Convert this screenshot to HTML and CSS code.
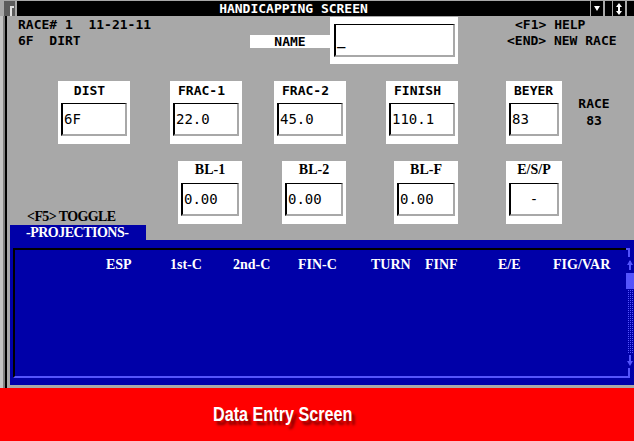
FILE: index.html
```html
<!DOCTYPE html>
<html lang="en">
<head>
  <meta charset="UTF-8">
  <title>Handicapping Screen</title>
  <link rel="stylesheet" href="styles.css">
</head>
<body>

  <div class="window">
    <div class="title-bar">
      <svg class="sysmenu" width="17" height="15" viewBox="0 0 17 15">
        <rect width="17" height="15" fill="#a8a8a8"/>
        <rect x="4" y="0" width="11" height="15" fill="#5c5c5c"/>
        <rect x="10" y="5" width="2" height="10" fill="#e0e0e0"/>
        <rect x="10" y="5" width="4" height="2" fill="#e0e0e0"/>
      </svg>
      <div class="title">HANDICAPPING SCREEN</div>
      <div class="winbtns">
        <span class="winbtn">
          <svg width="12" height="15" viewBox="0 0 12 15"><polygon points="3,5 9,5 6,10" fill="#fff"/></svg>
        </span>
        <span class="winbtn">
          <svg width="12" height="15" viewBox="0 0 12 15">
            <rect x="5" y="4" width="2" height="8" fill="#fff"/>
            <polygon points="3,6 6,2 9,6" fill="#fff"/>
            <polygon points="3,10 6,14 9,10" fill="#fff"/>
          </svg>
        </span>
      </div>
    </div>

    <div class="frame">
      <div class="screen">

        <div class="top">
          <div class="race-info">
            <div class="line">RACE# 1  11-21-11</div>
            <div class="line">6F  DIRT</div>
          </div>
          <div class="name-label">NAME</div>
          <div class="name-panel">
            <div class="entry cursor">_</div>
          </div>
          <div class="hotkeys">
            <div class="indent">&lt;F1&gt; HELP</div>
            <div>&lt;END&gt; NEW RACE</div>
          </div>
        </div>

        <div class="fields">
          <div class="field a-dist">
            <div class="label">&nbsp;DIST</div>
            <div class="entry">6F</div>
          </div>
          <div class="field a-frac1">
            <div class="label">FRAC-1</div>
            <div class="entry">22.0</div>
          </div>
          <div class="field a-frac2">
            <div class="label">FRAC-2</div>
            <div class="entry">45.0</div>
          </div>
          <div class="field a-finish">
            <div class="label">FINISH</div>
            <div class="entry">110.1</div>
          </div>
          <div class="field a-beyer">
            <div class="label">BEYER</div>
            <div class="entry">83</div>
          </div>
          <div class="race-total a-race">RACE<br>83</div>

          <div class="toggle serif a-toggle">&lt;F5&gt; TOGGLE</div>
          <div class="field inset a-bl1">
            <div class="label caption serif">BL-1</div>
            <div class="entry">0.00</div>
          </div>
          <div class="field inset a-bl2">
            <div class="label caption serif">BL-2</div>
            <div class="entry">0.00</div>
          </div>
          <div class="field inset a-blf">
            <div class="label caption serif">BL-F</div>
            <div class="entry">0.00</div>
          </div>
          <div class="field a-esp">
            <div class="label caption serif">E/S/P</div>
            <div class="entry center">-</div>
          </div>
        </div>

        <div class="tab serif">-PROJECTIONS-</div>
        <div class="projections">
          <div class="proj-frame">
            <div class="proj-grid serif">
              <span>ESP</span>
              <span>1st-C</span>
              <span>2nd-C</span>
              <span>FIN-C</span>
              <span>TURN</span>
              <span>FINF</span>
              <span>E/E</span>
              <span>FIG/VAR</span>
            </div>
            <svg class="scrollbar" width="8" height="130" viewBox="0 0 8 130">
              <defs>
                <pattern id="dots" width="2" height="2" patternUnits="userSpaceOnUse">
                  <rect width="1" height="1" fill="#5454fc"/>
                </pattern>
              </defs>
              <rect x="0" y="0" width="4" height="2" fill="#5454fc"/>
              <rect x="2" y="0" width="2" height="9" fill="#5454fc"/>
              <rect x="3" y="13" width="2" height="9" fill="#5454fc"/>
              <polygon points="1,17 4,12 7,17" fill="#5454fc"/>
              <rect x="0" y="25" width="8" height="16" fill="#5454fc"/>
              <rect x="1" y="41" width="6" height="64" fill="url(#dots)"/>
              <rect x="3" y="107" width="2" height="8" fill="#5454fc"/>
              <polygon points="1,113 4,118 7,113" fill="#5454fc"/>
              <rect x="2" y="120" width="2" height="10" fill="#5454fc"/>
              <rect x="0" y="128" width="4" height="2" fill="#5454fc"/>
            </svg>
          </div>
        </div>

      </div>
    </div>
  </div>

  <div class="banner"><span class="banner-text">Data Entry Screen</span></div>

</body>
</html>
```

FILE: styles.css
```css
body {
  margin: 0;
  width: 634px;
  height: 441px;
  overflow: hidden;
  font-family: "DejaVu Sans Mono", monospace;
  font-size: 13px;
  font-weight: bold;
  color: #000;
  background: #a8a8a8;
}

.serif {
  font-family: "Liberation Serif", serif;
  font-size: 14px;
}

/* title bar */

.title-bar {
  display: flex;
  height: 15px;
  border-top: 1px solid #a8a8a8;
  background: #000;
  color: #fff;
}

.sysmenu {
  display: block;
}

.title {
  flex: 1;
  padding-right: 20px;
  text-align: center;
  line-height: 16px;
}

.winbtns {
  display: flex;
  gap: 7px;
  padding-right: 7px;
}

.winbtn {
  display: block;
  width: 12px;
  border-left: 1px solid #a8a8a8;
  border-right: 2px solid #a8a8a8;
}

.winbtn svg {
  display: block;
}

/* window body with its left edge */

.frame {
  height: 372px;
  padding-left: 10px;
  background: linear-gradient(to right, #c4c4c4 0 3px, #808080 3px 5px, #000 5px 7px, #a8a8a8 7px);
}

.top {
  display: flex;
  height: 65px;
}

.race-info {
  width: 232px;
  margin-left: 8px;
  padding-top: 1px;
  line-height: 16px;
}

.race-info .line {
  white-space: pre;
}

.name-label {
  width: 80px;
  height: 13px;
  margin-top: 19px;
  background: #fff;
  text-align: center;
  line-height: 13px;
}

.name-panel {
  width: 128px;
  height: 47px;
  box-sizing: border-box;
  margin-top: 1px;
  padding: 7px 3px 0 4px;
  background: #fff;
}

.hotkeys {
  margin-left: 49px;
  padding-top: 1px;
  line-height: 16px;
}

.indent {
  padding-left: 8px;
}

/* entry fields */

.fields {
  display: grid;
  grid-template-columns: 48px 72px 40px 72px 32px 72px 40px 72px 48px 56px 16px 32px;
  grid-template-rows: 63px 63px;
  row-gap: 17px;
  grid-template-areas:
    ". dist . frac1 . frac2 . finish . beyer . race"
    "toggle toggle toggle bl1 . bl2 . blf . esp . .";
  margin-bottom: 1px;
}

.a-dist { grid-area: dist; }
.a-frac1 { grid-area: frac1; }
.a-frac2 { grid-area: frac2; }
.a-finish { grid-area: finish; }
.a-beyer { grid-area: beyer; }
.a-race { grid-area: race; }
.a-toggle { grid-area: toggle; }
.a-bl1 { grid-area: bl1; }
.a-bl2 { grid-area: bl2; }
.a-blf { grid-area: blf; }
.a-esp { grid-area: esp; }

.field {
  padding: 0 3px;
  background: #fff;
}

.field.inset {
  width: 64px;
  box-sizing: border-box;
  justify-self: end;
}

.label {
  height: 22px;
  padding-left: 5px;
  line-height: 20px;
  white-space: pre;
}

.label.caption {
  padding-left: 0;
  text-align: center;
  line-height: 17px;
}

.entry {
  height: 33px;
  box-sizing: border-box;
  padding-left: 1px;
  border-top: 1px solid #000;
  border-left: 2px solid #000;
  border-right: 2px solid #a8a8a8;
  border-bottom: 2px solid #a8a8a8;
  background: #fff;
  font-size: 14px;
  font-weight: normal;
  line-height: 31px;
}

.entry.center {
  padding-left: 0;
  text-align: center;
}

.entry.cursor {
  font-weight: bold;
}

.race-total {
  padding-top: 14px;
  text-align: center;
  line-height: 17px;
}

.toggle {
  align-self: end;
  margin-bottom: -1px;
  padding-left: 17px;
  line-height: 16px;
  letter-spacing: -0.6px;
}

/* projections panel */

.tab {
  width: 136px;
  height: 15px;
  box-sizing: border-box;
  padding-left: 16px;
  background: #0000a8;
  color: #fff;
  line-height: 15px;
  letter-spacing: -0.5px;
}

.projections {
  height: 145px;
  box-sizing: border-box;
  padding: 8px 0 0 3px;
  background: #0000a8;
}

.proj-frame {
  display: flex;
}

.proj-grid {
  flex: 1;
  height: 130px;
  box-sizing: border-box;
  display: grid;
  grid-template-columns: 64px 63px 65px 73px 54px 73px 55px auto;
  align-content: start;
  padding: 7px 0 0 91px;
  border-top: 2px solid #000;
  border-left: 2px solid #000;
  border-bottom: 2px solid #5454fc;
  color: #fff;
  line-height: 16px;
}

.scrollbar {
  display: block;
}

/* caption strip under the window */

.banner {
  height: 53px;
  padding-left: 213px;
  background: #ff0000;
  color: #fff;
  font-family: "Liberation Sans", Arial, sans-serif;
  font-size: 19.5px;
  font-weight: bold;
  line-height: 53px;
}

.banner-text {
  display: inline-block;
  transform: scaleX(0.83);
  transform-origin: left center;
  text-shadow: 4px 4px 3px #800000;
}
```
